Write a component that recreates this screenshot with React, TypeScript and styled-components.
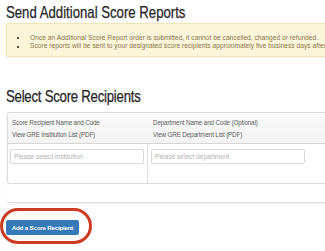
import React from "react";
import styled, { createGlobalStyle } from "styled-components";

const GlobalStyle = createGlobalStyle`
  html, body { margin: 0; padding: 0; background: #ffffff; }
  body { font-family: "Liberation Sans", Arial, sans-serif; }
`;

const Page = styled.div`
  width: 325px;
  height: 251px;
  overflow: hidden;
  padding-left: 6px;
  box-sizing: border-box;
`;

const Heading = styled.h1<{ $top: number; $spacing: number }>`
  margin: ${(p) => p.$top}px 0 0;
  font-family: "Liberation Sans", Arial, sans-serif;
  font-weight: normal;
  font-size: 17px;
  line-height: 20px;
  letter-spacing: ${(p) => p.$spacing}px;
  color: #262626;
  -webkit-text-stroke: 0.25px #262626;
  white-space: nowrap;
  transform: scaleX(0.775);
  transform-origin: left top;
`;

const Alert = styled.div`
  width: 340px;
  box-sizing: border-box;
  height: 34px;
  padding: 10px 0 0 9px;
  background: #fcf5d9;
  border: 1px solid #f3e4b3;
  border-radius: 2px;
  box-shadow: 0 1px 2px rgba(0, 0, 0, 0.06);
`;

const AlertList = styled.ul`
  margin: 0;
  padding: 0;
  list-style: none;
`;

const AlertItem = styled.li`
  display: flex;
  align-items: center;
  height: 8.4px;
  font-size: 6.7px;
  line-height: 8.4px;
  color: #8a7550;
  white-space: nowrap;
`;

const Bullet = styled.span`
  width: 2px;
  height: 2px;
  background: #5e4f33;
  margin: 0 11px 0 1px;
  flex: none;
`;

const Panel = styled.div`
  margin-top: 5px;
  margin-left: 1px;
  width: 340px;
  padding-bottom: 18px;
  border-bottom: 1px solid #e2e2e2;
  box-shadow: 0 1px 2px rgba(0, 0, 0, 0.08);
  border-bottom-left-radius: 3px;
`;

const Table = styled.div`
  border: 1px solid #dcdcdc;
  border-right: none;
  border-radius: 3px 0 0 3px;
  overflow: hidden;
`;

const HeaderRow = styled.div`
  display: grid;
  grid-template-columns: 139px 1fr;
  background: linear-gradient(#fafafa, #f3f3f3);
  border-bottom: 1px solid #d6d6d6;
  height: 30px;
`;

const HeaderCell = styled.div<{ $pad: number }>`
  padding: 4px 0 0 ${(p) => p.$pad}px;
  font-family: "Liberation Sans", Arial, sans-serif;
  font-size: 6.3px;
  letter-spacing: -0.15px;
  line-height: 12px;
  color: #5d5d5d;
  white-space: nowrap;
`;

const BodyRow = styled.div`
  display: grid;
  grid-template-columns: 139px 1fr;
  height: 39px;
`;

const BodyCell = styled.div<{ $divider?: boolean; $pad: number }>`
  padding: 5px 0 0 ${(p) => p.$pad}px;
  border-left: ${(p) => (p.$divider ? "1px solid #e0e0e0" : "none")};
`;

const SelectBox = styled.div<{ $width: number }>`
  width: ${(p) => p.$width}px;
  height: 15px;
  box-sizing: border-box;
  border: 1px solid #d8d8d8;
  border-radius: 2px;
  background: #fff;
  padding-left: 3px;
  font-size: 6.6px;
  line-height: 13px;
  color: #b3b3b3;
  white-space: nowrap;
  overflow: hidden;
`;

const ButtonWrap = styled.div`
  position: relative;
  margin-top: 17px;
  width: 73px;
`;

const Button = styled.button`
  display: block;
  width: 73px;
  height: 15px;
  padding: 0;
  border: none;
  border-radius: 2px;
  background: #3579b6;
  color: #ffffff;
  font-family: "Liberation Sans", Arial, sans-serif;
  font-weight: bold;
  font-size: 6.2px;
  letter-spacing: -0.2px;
  line-height: 15px;
  text-align: center;
  white-space: nowrap;
`;

const Annotation = styled.svg`
  position: absolute;
  left: -6px;
  top: -12px;
  width: 92px;
  height: 36px;
  overflow: visible;
  pointer-events: none;
`;

export default function App() {
  return (
    <>
      <GlobalStyle />
      <Page>
        <Heading $top={3} $spacing={0}>Send Additional Score Reports</Heading>
        <Alert>
          <AlertList>
            <AlertItem>
              <Bullet />
              Once an Additional Score Report order is submitted, it cannot be cancelled, changed or refunded.
            </AlertItem>
            <AlertItem>
              <Bullet />
              Score reports will be sent to your designated score recipients approximately five business days after your order is placed.
            </AlertItem>
          </AlertList>
        </Alert>
        <Heading $top={30} $spacing={-0.3}>Select Score Recipients</Heading>
        <Panel>
          <Table>
            <HeaderRow>
              <HeaderCell $pad={4}>
                Score Recipient Name and Code
                <br />
                View GRE Institution List (PDF)
              </HeaderCell>
              <HeaderCell $pad={6}>
                Department Name and Code (Optional)
                <br />
                View GRE Department List (PDF)
              </HeaderCell>
            </HeaderRow>
            <BodyRow>
              <BodyCell $pad={2}>
                <SelectBox $width={134}>Please select institution</SelectBox>
              </BodyCell>
              <BodyCell $divider $pad={3}>
                <SelectBox $width={154}>Please select department</SelectBox>
              </BodyCell>
            </BodyRow>
          </Table>
        </Panel>
        <ButtonWrap>
          <Button>Add a Score Recipient</Button>
          <Annotation viewBox="0 0 92 36">
            <rect x="1.5" y="1.5" width="89" height="33" rx="16.5" ry="16.5" fill="none" stroke="#cc3a22" strokeWidth="3" />
          </Annotation>
        </ButtonWrap>
      </Page>
    </>
  );
}
